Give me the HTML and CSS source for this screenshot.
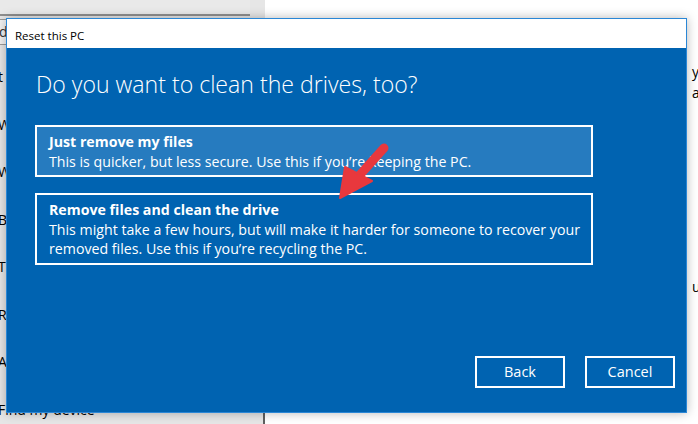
FILE: index.html
```html
<!DOCTYPE html>
<html>
<head>
<meta charset="utf-8">
<link rel="stylesheet" href="styles.css">
</head>
<body>
<div class="desktop">
  <div class="settings">
    <div class="topbar"></div>
    <div class="search">d</div>
    <div class="nav">
      <div class="nav-item">t</div>
      <div class="nav-item">Windows Update</div>
      <div class="nav-item">Windows Security</div>
      <div class="nav-item">Backup</div>
      <div class="nav-item">Troubleshoot</div>
      <div class="nav-item">Recovery</div>
      <div class="nav-item">Activation</div>
      <div class="nav-item">Find my device</div>
    </div>
  </div>
  <div class="content">
    <div class="frag frag-y">y</div>
    <div class="frag frag-a">a</div>
    <div class="frag frag-up">up</div>
  </div>
</div>

<div class="dialog">
  <div class="titlebar">Reset this PC</div>
  <div class="dialog-body">
    <h1 class="heading">Do you want to clean the drives, too?</h1>
    <div class="option option-selected">
      <div class="option-title">Just remove my files</div>
      <div class="option-text">This is quicker, but less secure. Use this if you’re keeping the PC.</div>
    </div>
    <div class="option">
      <div class="option-title">Remove files and clean the drive</div>
      <div class="option-text">This might take a few hours, but will make it harder for someone to recover your<br>removed files. Use this if you’re recycling the PC.</div>
    </div>
    <div class="footer">
      <div class="btn">Back</div>
      <div class="btn">Cancel</div>
    </div>
  </div>
</div>

<svg class="arrow" width="80" height="80" viewBox="330 135 80 80">
  <line x1="384" y1="148" x2="358" y2="177" stroke="#e8383d" stroke-width="9" stroke-linecap="round"/>
  <polygon points="340,198 345,167 372,181" fill="#e8383d" stroke="#e8383d" stroke-width="2" stroke-linejoin="round"/>
</svg>
</body>
</html>
```
FILE: styles.css
```css
* { box-sizing: border-box; }
html, body {
  margin: 0;
  padding: 0;
}
body {
  width: 698px;
  height: 424px;
  overflow: hidden;
  position: relative;
  font-family: "Open Sans", "Noto Sans", sans-serif;
  background: #fff;
}
.desktop {
  display: flex;
  height: 424px;
  overflow: hidden;
}
.settings {
  width: 265px;
  background: #e6e6e6;
  display: flex;
  flex-direction: column;
  color: #000;
  font-size: 14px;
  overflow: hidden;
}
.topbar {
  height: 16px;
  width: 250px;
  border-bottom: 2px solid #8f8f8f;
  background: #e9e9e9;
  flex: none;
}
.search {
  margin-top: 3px;
  height: 26px;
  width: 200px;
  border: 1px solid #9a9a9a;
  border-left: none;
  background: #f2f2f2;
  padding: 1px 0 0 0;
  margin-left: -1px;
  font-size: 14px;
  line-height: 22px;
  color: #333;
  flex: none;
}
.nav {
  flex: 1;
  min-height: 0;
  display: flex;
  flex-direction: column;
  padding-top: 22px;
  border-right: 2px solid #5f5f5f;
  overflow: hidden;
}
.nav-item {
  flex: none;
  height: 47.5px;
  margin-left: -2px;
  line-height: 20px;
  white-space: nowrap;
}
.content {
  flex: 1;
  position: relative;
  background: #fff;
  font-size: 14px;
  color: #000;
}
.frag {
  position: absolute;
  left: 427px;
  line-height: 20px;
}
.frag-y { top: 62px; }
.frag-a { top: 83px; }
.frag-up { top: 277px; }

.dialog {
  position: absolute;
  left: 6px;
  top: 18px;
  width: 681px;
  height: 395px;
  border: 1px solid #2a87d6;
  display: flex;
  flex-direction: column;
  box-shadow: 0 0 10px rgba(0,0,0,0.28);
  background: #0063b1;
}
.titlebar {
  height: 29px;
  background: #fff;
  color: #000;
  font-size: 11.5px;
  line-height: 27px;
  padding-left: 8px;
  padding-top: 3px;
  flex: none;
}
.dialog-body {
  flex: 1;
  background: #0063b1;
  color: #fff;
  display: flex;
  flex-direction: column;
  padding: 21px 11px 24px 28px;
}
.heading {
  margin: 0 0 25px 1px;
  font-weight: 300;
  font-size: 23.1px;
  line-height: 31px;
}
.option {
  width: 558px;
  border: 2px solid #fff;
  padding: 5px 4px 4px 12px;
  font-size: 14.2px;
  line-height: 19.5px;
  margin-bottom: 16px;
}
.option-selected {
  background: #267bbf;
}
.option-title {
  font-weight: 700;
}
.option-text {
  white-space: nowrap;
}
.footer {
  margin-top: auto;
  display: flex;
  justify-content: flex-end;
  gap: 20px;
}
.btn {
  width: 90px;
  height: 32px;
  border: 2px solid #fff;
  text-align: center;
  font-size: 14.5px;
  line-height: 28px;
}
.arrow {
  position: absolute;
  left: 330px;
  top: 135px;
}
```
